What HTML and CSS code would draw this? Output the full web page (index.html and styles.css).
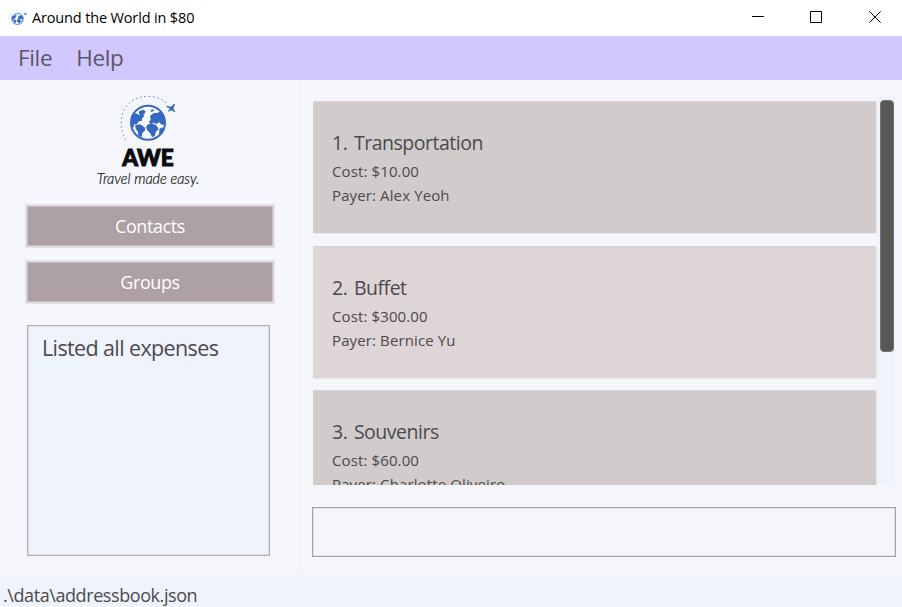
FILE: index.html
```html
<!DOCTYPE html>
<html lang="en">
<head>
<meta charset="utf-8">
<title>Around the World in $80</title>
<link rel="stylesheet" href="styles.css">
</head>
<body>
<header class="titlebar">
  <svg class="app-icon" viewBox="90 22 168 140" aria-hidden="true"><use href="#globe"/></svg>
  <span class="app-title">Around the World in $80</span>
  <svg class="win-controls" width="130" height="12" viewBox="0 0 130 12" fill="none" stroke="#000" aria-hidden="true">
    <path d="M0 5.5H12"/><path d="M58.5 .5h11v11h-11z"/><path d="M117.3 .3l11.4 11.4M128.7 .3L117.3 11.7"/>
  </svg>
</header>
<nav class="menubar"><span>File</span><span>Help</span></nav>
<main class="content">
  <aside class="sidebar">
    <svg class="logo" width="120" height="108" viewBox="0 0 360 324">
      <defs>
        <g id="globe">
          <circle cx="174" cy="104" r="51" fill="#f7faff" stroke="#3468c0" stroke-width="6"/>
          <g fill="#3468c0">
            <path d="M123 104l2-20 10-8 14 4 8-4 6 8-8 8 2 6-10 2-8 10-8-2 2 6-6 6z"/>
            <path d="M147 70l12-5 8 4-4 10-10 2-6-4z"/>
            <path d="M180 84l10-8 14-2 8-4 8 14 4 18-4 10-8-4-4-6-8 6-10-4-8 4-6-6 6-6z"/>
            <path d="M182 66l8-2 2 5-8 3z"/>
            <path d="M136 112l14-3 14 9 2 8-9 9-2 12-9-3-3-14-6-8z"/>
            <path d="M172 110l12-4 14 5 8 12-8 8-4 14-8 2-6-12-8-8-4-8z"/>
            <path d="M208 124l8-6 4 4-6 14-7 4z"/>
          </g>
          <path d="M107 156C74 98 102 25 174 25C196 25 216 32 232 47" fill="none" stroke="#6d91d2" stroke-width="3" stroke-dasharray="5 8"/>
          <path d="M229 53l14 3 9-9 3 2-5 13 6 9-2 2-9-6-10 4-1-3 6-6-11-6z" fill="#3468c0"/>
        </g>
      </defs>
      <use href="#globe"/>
      <text class="logo-name" x="97" y="235" textLength="154" lengthAdjust="spacingAndGlyphs">AWE</text>
      <text class="logo-tag" x="20" y="288" textLength="308" lengthAdjust="spacingAndGlyphs">Travel made easy.</text>
    </svg>
    <button class="side-button">Contacts</button>
    <button class="side-button">Groups</button>
    <section class="result">Listed all expenses</section>
  </aside>
  <section class="main-pane">
    <div class="list">
      <div class="cards">
        <article class="card"><h2>1. Transportation</h2><p>Cost: $10.00</p><p>Payer: Alex Yeoh</p></article>
        <article class="card even"><h2>2. Buffet</h2><p>Cost: $300.00</p><p>Payer: Bernice Yu</p></article>
        <article class="card"><h2>3. Souvenirs</h2><p>Cost: $60.00</p><p>Payer: Charlotte Oliveiro</p></article>
      </div>
      <div class="scrollbar"><div class="thumb"></div></div>
    </div>
    <div class="command"></div>
  </section>
</main>
<footer class="statusbar">.\data\addressbook.json</footer>
</body>
</html>
```
FILE: styles.css
```css
* { box-sizing: border-box; }
body {
  margin: 0; width: 902px; height: 607px; overflow: hidden;
  display: flex; flex-direction: column;
  background: #f4f6fc; color: #4c4a4c;
  font-family: "Open Sans", "Noto Sans", sans-serif;
}
.titlebar { height: 36px; flex: none; display: flex; align-items: center; background: #fff; padding: 0 20px 2px 8px; color: #000; }
.app-icon { width: 19px; height: 17px; margin-right: 5px; }
.app-title { font-size: 14.5px; letter-spacing: -.15px; flex: 1; }
.menubar { height: 44px; flex: none; display: flex; align-items: center; gap: 24px; padding: 0 18px 2px; background: #d2c7ff; color: #5a5664; font-size: 22.5px; letter-spacing: -.35px; }
.content { flex: 1; display: flex; min-height: 0; }
.sidebar { width: 300px; flex: none; display: flex; flex-direction: column; padding: 8px 26px 0 25px; border-right: 2px solid #f3f3fa; }
.logo { display: block; margin-left: 65px; flex: none; }
.logo-name { font: 900 68px Lato, sans-serif; fill: #0b0b0d; stroke: #0b0b0d; stroke-width: 3px; }
.logo-tag { font: italic 300 45px Lato, sans-serif; fill: #111; stroke: #111; stroke-width: .6px; }
.side-button {
  width: 250px; height: 44px; flex: none; margin: 8px 0 0; padding: 0;
  border: 2px solid #e1e0e3; background: #ada0a6; box-shadow: inset 0 0 0 1px #c3babf;
  color: #fff; font: 18px "Open Sans", sans-serif; letter-spacing: -.4px;
}
.side-button + .side-button { margin-top: 12px; }
.result { width: 243px; height: 231px; margin: 21px 0 0 2px; padding: 6px 14px; border: 1px solid #b6acb4; box-shadow: inset 0 0 0 1px #dedce6; background: #eff3fc; font-size: 21.5px; line-height: 32px; letter-spacing: -.62px; }
.main-pane { flex: 1; display: flex; flex-direction: column; padding: 15px 6px 0 12px; }
.list { height: 390px; display: flex; overflow: hidden; padding-left: 1px; }
.cards { width: 564px; padding-top: 6px; }
.card { width: 563px; height: 132px; margin-bottom: 13px; padding: 28px 19px 0; background: #d1cbcb; box-shadow: 1px 1px 0 #e9e8ed, inset 0 1px 0 #d9d4d6; }
.card.even { background: #ded5d6; margin-bottom: 12px; }
.card h2 { margin: 0 0 2px; font-size: 19.5px; font-weight: 400; line-height: 28px; letter-spacing: -.48px; word-spacing: 2px; }
.card p { margin: 0; font-size: 15px; line-height: 24px; letter-spacing: .12px; }
.scrollbar { width: 18px; background: #eff3fc; padding: 5px 1px 0 3px; }
.thumb { width: 14px; height: 252px; border-radius: 4px; background: #585858; border: 1px solid #74747a; }
.command { height: 50px; margin-top: 22px; border: 1px solid #aaa0a6; box-shadow: inset 0 0 0 1px #e2dfe7; }
.statusbar { height: 32px; flex: none; padding-left: 3px; background: #eff3fc; font-size: 18px; line-height: 40px; letter-spacing: -.42px; }
```
